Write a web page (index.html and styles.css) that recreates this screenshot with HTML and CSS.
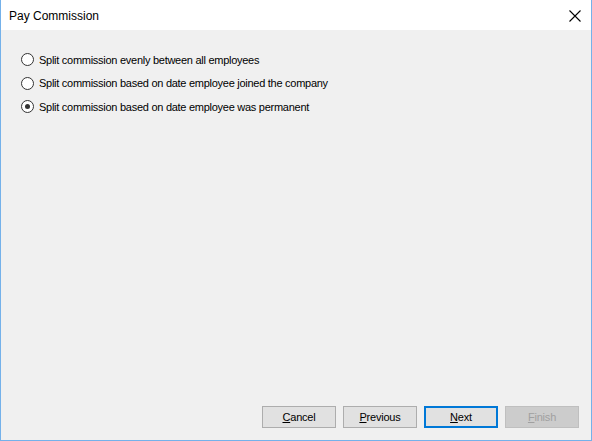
FILE: index.html
```html
<!DOCTYPE html>
<html>
<head>
<meta charset="utf-8">
<link rel="stylesheet" href="styles.css">
</head>
<body>
<div class="window">
  <div class="titlebar">
    <span class="title">Pay Commission</span>
    <span class="close"><svg width="12" height="12" viewBox="0 0 12 12"><path d="M0.5 0.5 L11.5 11.5 M11.5 0.5 L0.5 11.5" stroke="#000" stroke-width="1.1" fill="none"/></svg></span>
  </div>
  <div class="content">
    <div class="options">
      <label class="option"><span class="radio"></span><span>Split commission evenly between all employees</span></label>
      <label class="option"><span class="radio"></span><span>Split commission based on date employee joined the company</span></label>
      <label class="option"><span class="radio checked"></span><span>Split commission based on date employee was permanent</span></label>
    </div>
    <div class="buttons">
      <button class="btn"><u>C</u>ancel</button>
      <button class="btn"><u>P</u>revious</button>
      <button class="btn default"><u>N</u>ext</button>
      <button class="btn disabled"><u>F</u>inish</button>
    </div>
  </div>
</div>
</body>
</html>
```
FILE: styles.css
```css
html, body {
  margin: 0;
  padding: 0;
}
.window {
  width: 592px;
  height: 441px;
  box-sizing: border-box;
  border: 1px solid #74b1ea;
  border-top: none;
  background: #f0f0f0;
  display: flex;
  flex-direction: column;
  font-family: "Liberation Sans", Arial, sans-serif;
  font-size: 11px;
  color: #000;
}
.titlebar {
  height: 30px;
  box-sizing: border-box;
  background: #fff;
  display: flex;
  align-items: center;
  justify-content: space-between;
  padding: 1px 10px 0 8px;
  flex: none;
}
.title {
  font-size: 12px;
}
.close {
  display: flex;
}
.content {
  flex: 1;
  display: flex;
  flex-direction: column;
  justify-content: space-between;
  padding: 23px 12px 12px 20px;
}
.options {
  display: flex;
  flex-direction: column;
  gap: 10.5px;
}
.option {
  display: flex;
  align-items: center;
  gap: 5px;
  height: 13px;
  letter-spacing: -0.27px;
}
.radio {
  width: 11px;
  height: 11px;
  border: 1px solid #333;
  border-radius: 50%;
  background: #fff;
  position: relative;
  flex: none;
}
.radio.checked::after {
  content: "";
  position: absolute;
  left: 3px;
  top: 3px;
  width: 5px;
  height: 5px;
  border-radius: 50%;
  background: #333;
}
.buttons {
  display: flex;
  justify-content: flex-end;
  gap: 7px;
}
.btn {
  width: 74px;
  height: 22px;
  box-sizing: border-box;
  border: 1px solid #adadad;
  background: #e1e1e1;
  font-family: "Liberation Sans", Arial, sans-serif;
  font-size: 11px;
  letter-spacing: -0.2px;
  color: #000;
  padding: 0;
}
.btn.default {
  border: 2px solid #0078d7;
}
.btn.disabled {
  background: #cccccc;
  border-color: #bfbfbf;
  color: #a0a0a0;
}
```
